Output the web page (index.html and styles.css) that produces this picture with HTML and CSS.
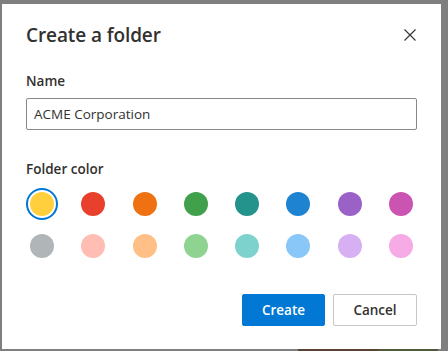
FILE: index.html
```html
<!DOCTYPE html>
<html lang="en">
<head>
    <meta charset="UTF-8">
    <meta name="viewport" content="width=device-width, initial-scale=1.0">
    <title>Create a folder</title>
    <link rel="stylesheet" href="styles.css">
</head>
<body>
    <div class="backdrop">
        <div class="dialog">
            <!-- 标题栏 -->
            <div class="dialog_head">
                <h2 class="dialog_title">Create a folder</h2>
                <a href="javascript:;" class="close_btn" aria-label="Close">
                    <svg width="12" height="12" viewBox="0 0 12 12">
                        <path d="M0.5 0.5 L11.5 11.5 M11.5 0.5 L0.5 11.5" stroke="#323130" stroke-width="1.1" fill="none"/>
                    </svg>
                </a>
            </div>
            <!-- 名称 -->
            <label class="field_label" for="folder_name">Name</label>
            <input class="name_input" id="folder_name" type="text" value="ACME Corporation">
            <!-- 颜色 -->
            <div class="field_label color_label">Folder color</div>
            <ul class="swatches">
                <li class="current"><span style="background:#ffcf3d"></span></li>
                <li><span style="background:#e8402c"></span></li>
                <li><span style="background:#ee7112"></span></li>
                <li><span style="background:#41a04b"></span></li>
                <li><span style="background:#24938b"></span></li>
                <li><span style="background:#1e83d1"></span></li>
                <li><span style="background:#9a62c7"></span></li>
                <li><span style="background:#cb53b2"></span></li>
                <li><span style="background:#b0b6b8"></span></li>
                <li><span style="background:#ffbdb3"></span></li>
                <li><span style="background:#ffbf86"></span></li>
                <li><span style="background:#8fd390"></span></li>
                <li><span style="background:#7ed2ce"></span></li>
                <li><span style="background:#88c7f7"></span></li>
                <li><span style="background:#d6b0f3"></span></li>
                <li><span style="background:#f6aae6"></span></li>
            </ul>
            <!-- 按钮 -->
            <div class="dialog_foot">
                <a href="javascript:;" class="btn btn_primary">Create</a>
                <a href="javascript:;" class="btn">Cancel</a>
            </div>
        </div>
        <div class="behind">
            <span class="behind_a"></span>
            <span class="behind_b"></span>
        </div>
    </div>
</body>
</html>
```

FILE: styles.css
```css
*{
    box-sizing: border-box;
}
body{
    margin: 0;
    background-color: #7f7f7f;
    font-family: "Open Sans", "Noto Sans", sans-serif;
    color: #323130;
}
.backdrop{
    width: 448px;
    height: 351px;
    padding: 4px 0 0 2px;
    overflow: hidden;
}
.dialog{
    width: 439px;
    height: 345px;
    background-color: #fff;
    padding: 0 24px;
    display: flex;
    flex-direction: column;
}
.dialog_head{
    display: flex;
    justify-content: space-between;
    align-items: center;
    padding-top: 17px;
    height: 45px;
}
.dialog_title{
    margin: 0;
    font-size: 19px;
    font-weight: 600;
    line-height: 28px;
    letter-spacing: -0.1px;
}
.close_btn{
    display: flex;
    width: 12px;
    height: 12px;
    margin-right: 1px;
    margin-top: -1px;
}
.field_label{
    display: block;
    font-size: 13.5px;
    font-weight: 600;
    line-height: 20px;
    margin-top: 22px;
}
.name_input{
    margin-top: 7px;
    width: 391px;
    height: 32px;
    border: 1px solid #8a8886;
    border-radius: 2px;
    padding: 0 7px;
    font-family: inherit;
    font-size: 13.5px;
    color: #323130;
    outline: none;
}
.color_label{
    margin-top: 29px;
}
.swatches{
    list-style: none;
    margin: 9px 0 0;
    padding: 0;
    display: grid;
    grid-template-columns: repeat(8, 32px);
    justify-content: space-between;
    row-gap: 10px;
    width: 391px;
}
.swatches li{
    width: 32px;
    height: 32px;
    border-radius: 50%;
    border: 2px solid transparent;
    display: flex;
    align-items: center;
    justify-content: center;
}
.swatches li.current{
    border-color: #0078d4;
}
.swatches span{
    width: 24px;
    height: 24px;
    border-radius: 50%;
}
.dialog_foot{
    margin-top: auto;
    margin-bottom: 23px;
    display: flex;
    justify-content: flex-end;
    gap: 8px;
}
.btn{
    width: 84px;
    height: 32px;
    border: 1px solid #c8c6c4;
    border-radius: 2px;
    text-align: center;
    line-height: 30px;
    font-size: 13.5px;
    font-weight: 600;
    color: #323130;
    text-decoration: none;
}
.btn_primary{
    width: 83px;
    background-color: #0078d4;
    border-color: #0078d4;
    color: #fff;
}
.behind{
    display: flex;
    margin-left: 296px;
    height: 2px;
}
.behind_a{
    width: 80px;
    background-color: #5a4234;
}
.behind_b{
    width: 60px;
    background-color: #4f5a3a;
}
```
